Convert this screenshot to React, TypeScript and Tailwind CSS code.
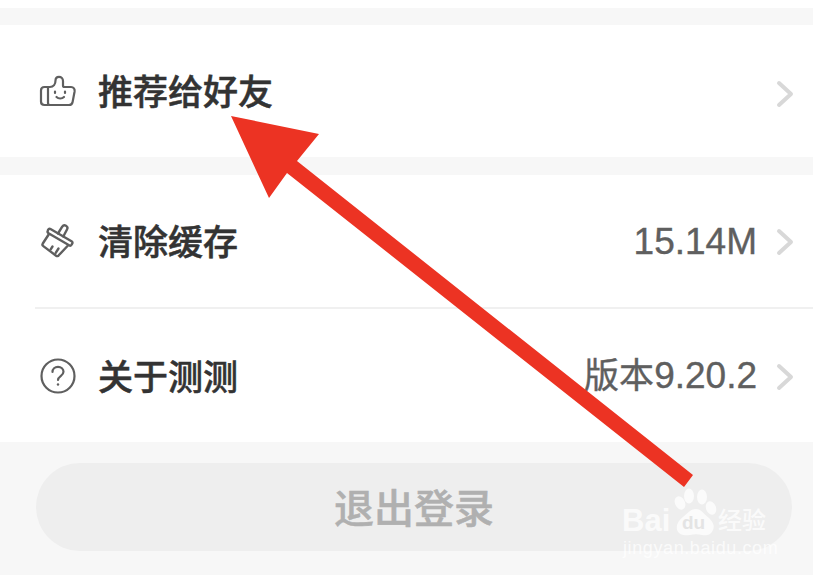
const cjk = "font-['Noto_Sans_CJK_SC','Liberation_Sans',sans-serif]"

function ThumbIcon() {
  return (
    <svg width="38" height="34" viewBox="0 0 38 34" fill="none" stroke="#5f5f5f" strokeWidth="2.200" strokeLinecap="round" strokeLinejoin="round">
      <path d="M9 13H5.500C3.500 13 2 14.500 2 16.500v11C2 29.500 3.500 31 5.500 31H9" />
      <path d="M9 13v16c0 1.200.8 2 2 2h19c2 0 3.200-1 3.600-3l2-10.500c.4-2.500-1-4.500-3.600-4.500h-6.500c-1 0-1.500-.6-1.500-1.500V7c0-2.500-1.800-4.200-4-4.200s-3.500 1.700-3.500 3.700c0 3.500-2 6.500-5.500 6.500Z" />
      <path d="M16 17.500v1.500M26 17.500v1.500" />
      <path d="M17.500 23c2 2 5.500 2 7.500 0" />
    </svg>
  )
}

function BroomIcon() {
  return (
    <svg width="36" height="36" viewBox="0 0 36 36" fill="none" stroke="#5f5f5f" strokeWidth="2.400" strokeLinecap="round" strokeLinejoin="round">
      <path d="M18 10.500l4.200-6.800c.9-1.300 2.400-1.700 3.800-.9s1.800 2.300 1 3.700L23.300 13.500" />
      <path d="M10.500 6l21 12.200c1 .6 1.300 1.600.7 2.500l-.6 1c-.6.900-1.600 1.200-2.500.6L8.500 10.200c-.9-.6-1.200-1.600-.6-2.500l.1-.6c.5-1.100 1.500-1.600 2.500-1.100Z" />
      <path d="M9 11L2.800 20.500c-.6 1-.4 2 .5 2.600l12.800 9.600c1 .7 2 .5 2.600-.4L27.500 23" />
      <path d="M12.500 23.500l-1.800 2.800M18.500 25.500l-2.800 4.300" />
    </svg>
  )
}

function HelpIcon() {
  return (
    <svg width="36" height="36" viewBox="0 0 36 36" fill="none" stroke="#5f5f5f" strokeWidth="2.200" strokeLinecap="round" strokeLinejoin="round">
      <circle cx="18" cy="18" r="16.500" />
      <path d="M12.500 14c0-3 2.400-5.200 5.500-5.200s5.500 2.100 5.500 4.900c0 4.300-5.500 4.300-5.500 8.300" />
      <circle cx="18" cy="26.500" r="1.200" fill="#5f5f5f" stroke="none" />
    </svg>
  )
}

function Chevron() {
  return (
    <svg width="18" height="28" viewBox="0 0 18 28" fill="none" stroke="#d8d8d8" strokeWidth="4" strokeLinecap="round" strokeLinejoin="round">
      <path d="M3 3l12 11L3 25" />
    </svg>
  )
}

function Row({ icon, label, value, chevronClass }: { icon: React.ReactNode; label: string; value?: React.ReactNode; chevronClass: string }) {
  return (
    <div className="flex h-full items-center">
      <div className="flex w-[62px] shrink-0 justify-center">{icon}</div>
      <span className={`mb-[3px] ml-[9px] text-[35px] leading-none font-medium text-[#333333] [-webkit-text-stroke:0.5px_#333333] ${cjk}`}>{label}</span>
      {value && <span className="ml-auto text-[37px] leading-none text-[#5f5f5f] [-webkit-text-stroke:0.4px_#5f5f5f] font-['Liberation_Sans','Noto_Sans_CJK_SC',sans-serif]">{value}</span>}
      <div className={`mr-[19px] flex w-[18px] shrink-0 ${value ? 'ml-[19px]' : 'ml-auto'} ${chevronClass}`}>
        <Chevron />
      </div>
    </div>
  )
}

function Arrow() {
  return (
    <svg className="absolute inset-0" width="813" height="575" viewBox="0 0 813 575">
      <polygon points="231,116 319,134 297,161 693,475 684,487 287,173 269,198" fill="#ec3323" />
    </svg>
  )
}

function Watermark() {
  return (
    <div className="absolute left-[622px] top-[486px] h-[74px] w-[150px] text-white/75">
      <svg className="absolute left-[51px] top-[2px]" width="46" height="50" viewBox="0 0 46 50" fill="currentColor">
        <ellipse cx="7" cy="15" rx="5" ry="7" transform="rotate(-25 7 15)" />
        <ellipse cx="16" cy="8" rx="5" ry="7.500" />
        <ellipse cx="29" cy="9" rx="5" ry="7.500" />
        <ellipse cx="38" cy="20" rx="5" ry="7" transform="rotate(-20 38 20)" />
        <path d="M23 21c5 0 8 5 13 9 4 4 6 8 4 12-2 5-7 6-11 5-4-1-8-1-12 0-5 1-11 0-13-5-1-5 1-9 6-13 4-3 7-8 13-8Z" />
      </svg>
      <span className="absolute left-0 top-[19px] text-[31px] leading-none font-bold font-['Liberation_Sans',sans-serif]">Bai</span>
      <span className="absolute left-[60px] top-[27px] text-[19px] leading-none font-bold text-[#e4e4e4] font-['Liberation_Sans',sans-serif]">du</span>
      <span className={`absolute left-[96px] top-[21px] whitespace-nowrap text-[24px] leading-none font-medium ${cjk}`}>经验</span>
      <span className="absolute left-[1px] top-[53px] whitespace-nowrap text-[18px] leading-none tracking-[0.6px] font-['Liberation_Sans',sans-serif]">jingyan.baidu.com</span>
    </div>
  )
}

export default function App() {
  return (
    <div className="relative flex h-[575px] w-[813px] flex-col overflow-hidden bg-white">
      <div className="h-[8px] shrink-0 bg-white" />
      <div className="h-[17px] shrink-0 bg-[#f7f7f7]" />
      <div className="h-[132px] shrink-0 bg-white pl-[27px]">
        <Row icon={<ThumbIcon />} label="推荐给好友" chevronClass="mt-[6px]" />
      </div>
      <div className="h-[18px] shrink-0 bg-[#f7f7f7]" />
      <div className="flex h-[267px] shrink-0 flex-col bg-white pl-[27px]">
        <div className="ml-[8px] h-[134px] border-b-2 border-[#f0f0f0]">
          <div className="-ml-[8px] h-full">
            <Row icon={<BroomIcon />} label="清除缓存" value="15.14M" chevronClass="mt-[2px]" />
          </div>
        </div>
        <div className="h-[133px]">
          <Row
            icon={<HelpIcon />}
            label="关于测测"
            value={
              <>
                <span className="text-[35px]">版本</span>9.20.2
              </>
            }
            chevronClass="mt-[2px]"
          />
        </div>
      </div>
      <div className="flex flex-1 items-start bg-[#f7f7f7] pl-[36px] pt-[21px]">
        <div className="flex h-[88px] w-[756px] shrink-0 items-center justify-center rounded-full bg-[#eeeeee]">
          <span className={`mb-[2px] text-[40px] leading-none font-medium text-[#b0b0b0] [-webkit-text-stroke:0.5px_#b0b0b0] ${cjk}`}>退出登录</span>
        </div>
      </div>
      <Arrow />
      <Watermark />
    </div>
  )
}
